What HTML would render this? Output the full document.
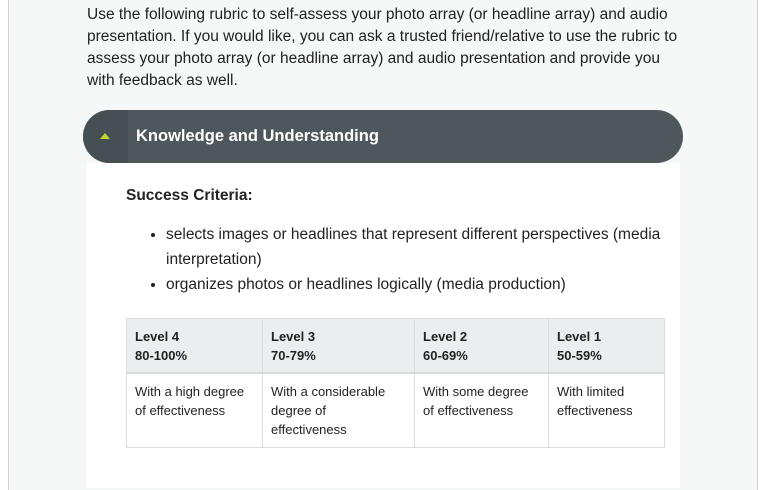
<!DOCTYPE html>
<html><head><style>
html,body{margin:0;width:763px;height:490px;overflow:hidden}
body{background:#fff;font-family:"Liberation Sans",Arial,sans-serif;color:#222;position:relative}
.wrap{position:absolute;left:8px;top:-10px;width:748px;height:500px;background:#f6f7f7;border-left:1px solid #d4d4d4;border-right:1px solid #d4d4d4}
p.intro{position:absolute;left:87px;top:4px;width:600px;margin:0;font-size:15.5px;line-height:22px;color:#222}
.hdr{position:absolute;left:83px;top:110px;width:600px;height:53px;background:#4e585c;border-radius:27px;overflow:hidden}
.hdr .ic{position:absolute;left:0;top:0;width:45px;height:53px;background:#465054}
.hdr .tri{position:absolute;left:17px;top:23px;width:0;height:0;border-left:5px solid transparent;border-right:5px solid transparent;border-bottom:6px solid #c2d52c}
.hdr .t{position:absolute;left:53px;top:17px;color:#fff;font-weight:bold;font-size:16.5px}
.body{position:absolute;left:86px;top:163px;width:594px;height:325px;background:#fff}
h4{position:absolute;left:40px;top:24px;margin:0;font-size:15.5px;font-weight:bold}
ul{position:absolute;left:40px;top:59px;margin:0;padding-left:40px;width:520px;font-size:15.5px;line-height:25px}
table{position:absolute;left:40px;top:155px;border-collapse:collapse;font-size:13px;line-height:19px;width:539px}
td,th{border:1px solid #ddd;vertical-align:top;text-align:left;padding:7px 8px}
th{background:#ebeeee;font-weight:bold;border-bottom:2px solid #d8dbdb;height:38px;padding-top:8px}
td{height:58px;padding-top:8px}
</style></head><body>
<div class="wrap"></div>
<p class="intro">Use the following rubric to self-assess your photo array (or headline array) and audio presentation. If you would like, you can ask a trusted friend/relative to use the rubric to assess your photo array (or headline array) and audio presentation and provide you with feedback as well.</p>
<div class="hdr"><div class="ic"><div class="tri"></div></div><div class="t">Knowledge and Understanding</div></div>
<div class="body">
<h4>Success Criteria:</h4>
<ul><li>selects images or headlines that represent different perspectives (media interpretation)</li><li>organizes photos or headlines logically (media production)</li></ul>
<table>
<tr><th style="width:119px">Level 4<br>80-100%</th><th style="width:135px">Level 3<br>70-79%</th><th style="width:117px">Level 2<br>60-69%</th><th>Level 1<br>50-59%</th></tr>
<tr><td>With a high degree<br>of effectiveness</td><td>With a considerable<br>degree of<br>effectiveness</td><td>With some degree<br>of effectiveness</td><td>With limited<br>effectiveness</td></tr>
</table>
</div>
</body></html>
